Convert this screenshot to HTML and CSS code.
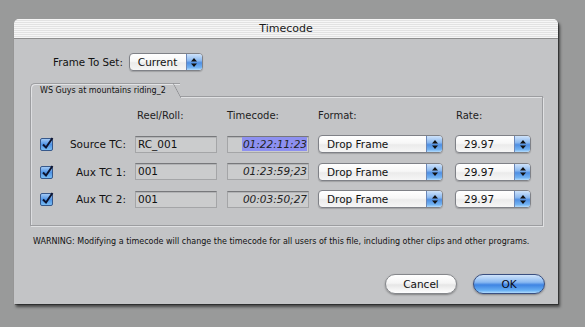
FILE: index.html
```html
<!DOCTYPE html>
<html>
<head>
<meta charset="utf-8">
<title>Timecode</title>
<link rel="stylesheet" href="styles.css">
</head>
<body>
<div class="dialog">
  <div class="titlebar">Timecode</div>
  <div class="content">
    <div class="frame-row">
      <span class="frame-label">Frame To Set:</span>
      <div class="popup popup-current">
        <span class="popup-text">Current</span>
        <span class="popup-arrows"><svg width="6" height="9" viewBox="0 0 6 9"><path d="M3 0 L6 3.5 L0 3.5 Z M0 5.5 L6 5.5 L3 9 Z" fill="#111"/></svg></span>
      </div>
    </div>

    <div class="tabrow">
      <div class="tab">WS Guys at mountains riding_2</div>
      <div class="tabline"></div>
    </div>
    <div class="group">
      <div class="grid">
        <div class="hdr c3">Reel/Roll:</div>
        <div class="hdr c4">Timecode:</div>
        <div class="hdr c5">Format:</div>
        <div class="hdr c6">Rate:</div>

        <div class="cb"><svg width="14" height="14" viewBox="0 0 14 14"><defs><linearGradient id="g1" x1="0" y1="0" x2="0" y2="1"><stop offset="0" stop-color="#a9cdf5"/><stop offset="0.5" stop-color="#4f94e6"/><stop offset="1" stop-color="#7cc0f5"/></linearGradient></defs><rect x="0.5" y="1.5" width="12" height="12" rx="1.5" fill="url(#g1)" stroke="#37588a"/><path d="M3 7.5 L6 10.5 L12.5 1" fill="none" stroke="#0c1430" stroke-width="2"/></svg></div>
        <div class="rowlabel">Source TC:</div>
        <div class="field reel">RC_001</div>
        <div class="field tc"><span class="sel">01:22:11:23</span></div>
        <div class="popup popup-format"><span class="popup-text">Drop Frame</span><span class="popup-arrows"><svg width="6" height="9" viewBox="0 0 6 9"><path d="M3 0 L6 3.5 L0 3.5 Z M0 5.5 L6 5.5 L3 9 Z" fill="#111"/></svg></span></div>
        <div class="popup popup-rate"><span class="popup-text">29.97</span><span class="popup-arrows"><svg width="6" height="9" viewBox="0 0 6 9"><path d="M3 0 L6 3.5 L0 3.5 Z M0 5.5 L6 5.5 L3 9 Z" fill="#111"/></svg></span></div>

        <div class="cb"><svg width="14" height="14" viewBox="0 0 14 14"><rect x="0.5" y="1.5" width="12" height="12" rx="1.5" fill="url(#g1)" stroke="#37588a"/><path d="M3 7.5 L6 10.5 L12.5 1" fill="none" stroke="#0c1430" stroke-width="2"/></svg></div>
        <div class="rowlabel">Aux TC 1:</div>
        <div class="field reel">001</div>
        <div class="field tc">01:23:59;23</div>
        <div class="popup popup-format"><span class="popup-text">Drop Frame</span><span class="popup-arrows"><svg width="6" height="9" viewBox="0 0 6 9"><path d="M3 0 L6 3.5 L0 3.5 Z M0 5.5 L6 5.5 L3 9 Z" fill="#111"/></svg></span></div>
        <div class="popup popup-rate"><span class="popup-text">29.97</span><span class="popup-arrows"><svg width="6" height="9" viewBox="0 0 6 9"><path d="M3 0 L6 3.5 L0 3.5 Z M0 5.5 L6 5.5 L3 9 Z" fill="#111"/></svg></span></div>

        <div class="cb"><svg width="14" height="14" viewBox="0 0 14 14"><rect x="0.5" y="1.5" width="12" height="12" rx="1.5" fill="url(#g1)" stroke="#37588a"/><path d="M3 7.5 L6 10.5 L12.5 1" fill="none" stroke="#0c1430" stroke-width="2"/></svg></div>
        <div class="rowlabel">Aux TC 2:</div>
        <div class="field reel">001</div>
        <div class="field tc">00:03:50;27</div>
        <div class="popup popup-format"><span class="popup-text">Drop Frame</span><span class="popup-arrows"><svg width="6" height="9" viewBox="0 0 6 9"><path d="M3 0 L6 3.5 L0 3.5 Z M0 5.5 L6 5.5 L3 9 Z" fill="#111"/></svg></span></div>
        <div class="popup popup-rate"><span class="popup-text">29.97</span><span class="popup-arrows"><svg width="6" height="9" viewBox="0 0 6 9"><path d="M3 0 L6 3.5 L0 3.5 Z M0 5.5 L6 5.5 L3 9 Z" fill="#111"/></svg></span></div>
      </div>
    </div>

    <p class="warning">WARNING: Modifying a timecode will change the timecode for all users of this file, including other clips and other programs.</p>

    <div class="buttons">
      <div class="btn btn-cancel">Cancel</div>
      <div class="btn btn-ok">OK</div>
    </div>
  </div>
</div>
</body>
</html>
```

FILE: styles.css
```css
html, body {
  margin: 0;
  padding: 0;
}
body {
  background: #999a9a;
  width: 585px;
  height: 327px;
  overflow: hidden;
  font-family: "DejaVu Sans", sans-serif;
  color: #111;
}
.dialog {
  margin: 19px 0 0 14px;
  width: 544px;
  background: #c3c4c6;
  border-radius: 5px 5px 0 0;
  box-shadow: 2px 3px 3px rgba(0,0,0,0.55), 1px 1px 0 rgba(0,0,0,0.35);
}
.titlebar {
  height: 19px;
  border-bottom: 1px solid #8e8e8e;
  border-radius: 5px 5px 0 0;
  background: repeating-linear-gradient(to bottom, #f6f6f6 0px, #f6f6f6 1px, #e2e2e2 1px, #e2e2e2 2px);
  text-align: center;
  font-size: 11px;
  line-height: 20px;
  color: #1a1a1a;
}
.content {
  display: flex;
  flex-direction: column;
  padding: 0 0 10px 0;
}
.frame-row {
  display: flex;
  align-items: center;
  margin: 14px 0 0 39px;
  gap: 6px;
  height: 18px;
}
.frame-label {
  font-size: 10.3px;
}
.popup {
  display: flex;
  align-items: stretch;
  height: 18px;
  box-sizing: border-box;
  border: 1px solid #7f8187;
  border-radius: 4px;
  background: linear-gradient(to bottom, #ffffff 0%, #f7f7f7 45%, #ebebeb 55%, #f6f6f6 100%);
  box-shadow: 0 1px 1px rgba(0,0,0,0.18);
  overflow: hidden;
}
.popup-text {
  flex: 1;
  font-size: 10.5px;
  line-height: 16px;
  padding-left: 8px;
  color: #111;
}
.popup-arrows {
  width: 15px;
  display: flex;
  align-items: center;
  justify-content: center;
  border-left: 1px solid #6b87b8;
  background: linear-gradient(to bottom, #cfe3fa 0%, #8dbaf0 40%, #4f8fe3 55%, #73b3f2 85%, #b6dcfb 100%);
}
.popup-current {
  width: 74px;
}
.popup-format {
  width: 125px;
}
.popup-rate {
  width: 76px;
}
.tabrow {
  display: flex;
  margin: 12px 0 0 16px;
  width: 513px;
  height: 14px;
  align-items: stretch;
}
.tab {
  position: relative;
  box-sizing: border-box;
  border-left: 1px solid #9c9da0;
  border-top: 1px solid #9c9da0;
  border-radius: 5px 0 0 0;
  padding: 0 14px 0 9px;
  font-size: 8px;
  line-height: 13px;
  color: #111;
  box-shadow: inset 1px 1px 0 #e2e3e5;
}
.tab::after {
  content: "";
  position: absolute;
  right: -1px;
  top: -1px;
  width: 8px;
  height: 15px;
  background: linear-gradient(to right top, transparent calc(50% - 0.7px), #8f9093 50%, transparent calc(50% + 0.7px));
}
.tabline {
  flex: 1;
  border-bottom: 1px solid #9c9da0;
  box-shadow: 0 1px 0 #e0e1e3;
}
.group {
  margin-left: 16px;
  width: 513px;
  box-sizing: border-box;
  border: 1px solid #9c9da0;
  border-top: none;
  box-shadow: inset 1px 0 0 #dcdde0, 1px 1px 0 #e0e1e3;
  padding: 12px 0 17px 10px;
}
.grid {
  display: grid;
  grid-template-columns: 13px 81px 92px 91px 137px 76px;
  row-gap: 9.5px;
  align-items: center;
}
.hdr {
  font-size: 10px;
  line-height: 13px;
  height: 13px;
  margin-bottom: 3.5px;
  color: #222;
}
.c3 { grid-column: 3; padding-left: 2px; }
.c4 { grid-column: 4; }
.c5 { grid-column: 5; }
.c6 { grid-column: 6; padding-left: 1px; }
.cb {
  height: 14px;
  margin-left: -1px;
}
.cb svg {
  display: block;
}
.rowlabel {
  font-size: 10.5px;
  text-align: right;
  padding-right: 9px;
  white-space: nowrap;
}
.field {
  height: 17px;
  box-sizing: border-box;
  width: 82px;
  background: #cbcccd;
  border: 1px solid #a4a5a7;
  border-top-color: #77787b;
  box-shadow: inset 0 1px 0 #b2b3b5;
  font-size: 10.5px;
  line-height: 15px;
  white-space: nowrap;
}
.reel {
  padding-left: 2px;
}
.tc {
  text-align: right;
  font-style: italic;
  padding-right: 1px;
  color: #222;
}
.sel {
  background: #8d90f0;
  display: inline-block;
  line-height: 14px;
  padding-left: 1px;
}
.warning {
  margin: 10px 0 0 19px;
  font-size: 8px;
  line-height: 11px;
  color: #111;
  white-space: nowrap;
}
.buttons {
  display: flex;
  justify-content: flex-end;
  gap: 16px;
  margin: 27px 13px 0 0;
}
.btn {
  width: 72px;
  height: 20px;
  box-sizing: border-box;
  border-radius: 10px;
  font-size: 10.5px;
  line-height: 18px;
  text-align: center;
  box-shadow: 0 1px 2px rgba(0,0,0,0.35);
}
.btn-cancel {
  border: 1px solid #85878b;
  background: linear-gradient(to bottom, #ffffff 0%, #f5f5f5 45%, #e6e6e6 55%, #ffffff 100%);
  color: #111;
}
.btn-ok {
  border: 1px solid #3a4f80;
  background: linear-gradient(to bottom, #d0e4fb 0%, #8ab9f1 40%, #3f84e2 55%, #66aef3 85%, #b0dcfd 100%);
  color: #0a0a18;
}
```
